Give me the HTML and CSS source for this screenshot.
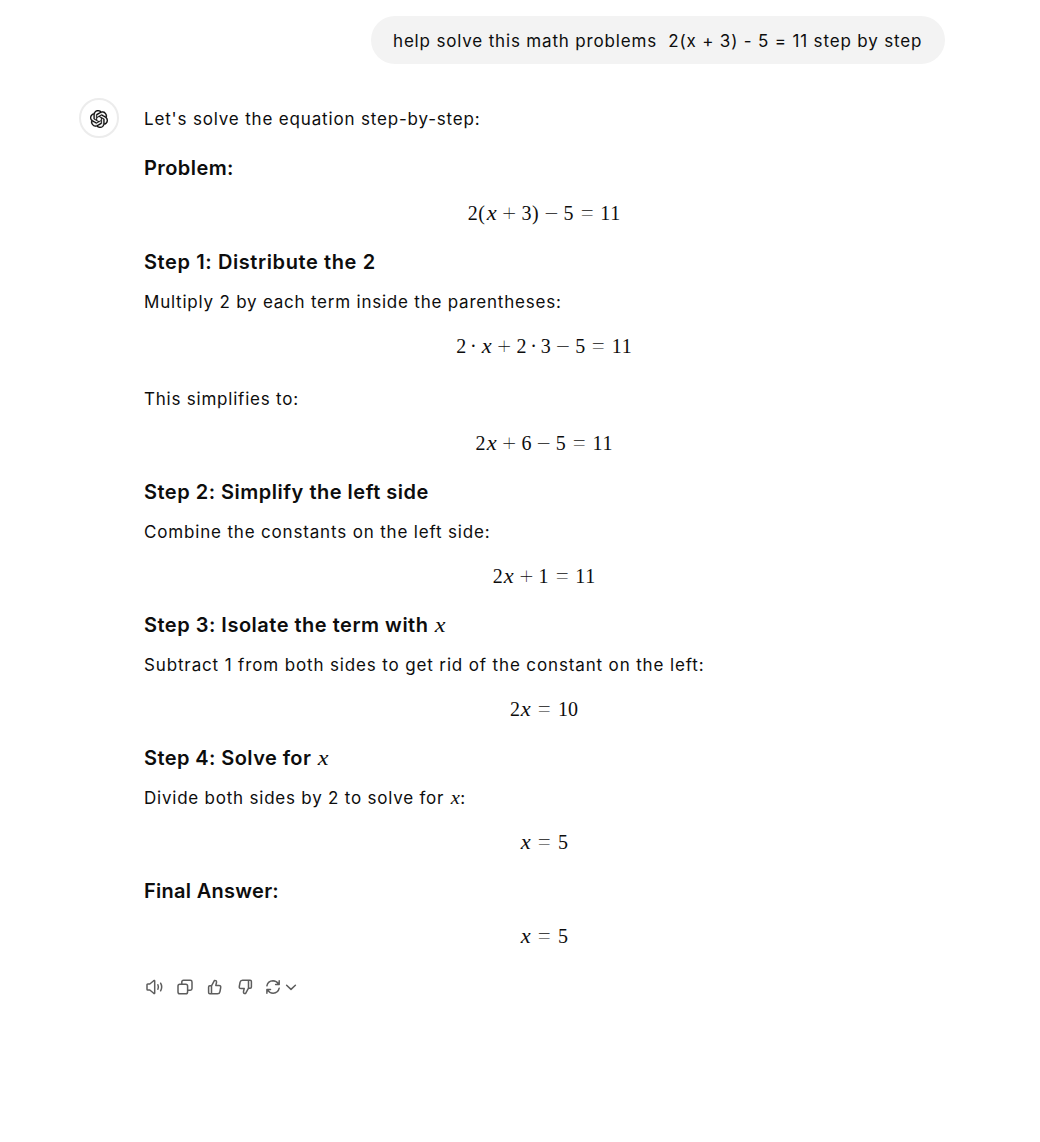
FILE: index.html
```html
<!DOCTYPE html>
<html lang="en">
<head>
<meta charset="utf-8">
<title>Solving an equation</title>
<link rel="stylesheet" href="styles.css">
</head>
<body>
<main class="chat">
  <div class="user-row"><div class="bubble">help solve this math problems&nbsp; 2(x + 3) - 5 = 11 step by step</div></div>
  <article class="reply">
    <div class="avatar">
      <svg viewBox="0 0 24 24" width="18" height="18" fill="currentColor" stroke="currentColor" stroke-width=".3"><path d="M22.28 9.82a5.98 5.98 0 0 0-.52-4.91 6.05 6.05 0 0 0-6.51-2.9A6.07 6.07 0 0 0 4.98 4.18a5.98 5.98 0 0 0-4 2.9 6.05 6.05 0 0 0 .74 7.1 5.98 5.98 0 0 0 .51 4.91 6.05 6.05 0 0 0 6.52 2.9A5.98 5.98 0 0 0 13.26 24a6.06 6.06 0 0 0 5.77-4.21 5.99 5.99 0 0 0 4-2.9 6.06 6.06 0 0 0-.75-7.07zM13.26 22.43a4.48 4.48 0 0 1-2.88-1.04l.14-.08 4.78-2.76a.8.8 0 0 0 .39-.68v-6.74l2.02 1.17a.07.07 0 0 1 .04.05v5.58a4.5 4.5 0 0 1-4.49 4.5zM3.6 18.3a4.47 4.47 0 0 1-.54-3.01l.14.09 4.78 2.76a.77.77 0 0 0 .78 0l5.84-3.37v2.33a.08.08 0 0 1-.03.06L9.74 19.95a4.5 4.5 0 0 1-6.14-1.65zM2.34 7.9a4.49 4.49 0 0 1 2.37-1.98V11.6a.77.77 0 0 0 .39.68l5.81 3.35-2.02 1.17a.08.08 0 0 1-.07 0l-4.83-2.79A4.5 4.5 0 0 1 2.34 7.87zm16.6 3.85-5.84-3.39 2.02-1.16a.08.08 0 0 1 .07 0l4.83 2.79a4.49 4.49 0 0 1-.68 8.1v-5.67a.79.79 0 0 0-.4-.67zm2.01-3.02-.14-.09-4.77-2.78a.78.78 0 0 0-.79 0L9.41 9.23V6.9a.07.07 0 0 1 .03-.06l4.83-2.79a4.5 4.5 0 0 1 6.68 4.66zM8.31 12.86l-2.02-1.16a.08.08 0 0 1-.04-.06V6.07a4.5 4.5 0 0 1 7.38-3.45l-.14.08-4.78 2.76a.8.8 0 0 0-.4.68zm1.1-2.36 2.6-1.5 2.6 1.5v3l-2.6 1.5-2.6-1.5z"/></svg>
    </div>
    <div class="content">
      <p>Let's solve the equation step-by-step:</p>
      <h3>Problem:</h3>
      <div class="eq after-heading"><i class="n">2</i><i class="b">(</i><i class="x">x</i><i class="o">+</i><i class="n">3</i><i class="b">)</i><i class="o">−</i><i class="n">5</i><i class="r">=</i><i class="n">1</i><i class="n">1</i></div>
      <h3 class="loose">Step 1: Distribute the 2</h3>
      <p class="snug">Multiply 2 by each term inside the parentheses:</p>
      <div class="eq"><i class="n">2</i><i class="d">·</i><i class="x">x</i><i class="o">+</i><i class="n">2</i><i class="d">·</i><i class="n">3</i><i class="o">−</i><i class="n">5</i><i class="r">=</i><i class="n">1</i><i class="n">1</i></div>
      <p class="next snug">This simplifies to:</p>
      <div class="eq"><i class="n">2</i><i class="x">x</i><i class="o">+</i><i class="n">6</i><i class="o">−</i><i class="n">5</i><i class="r">=</i><i class="n">1</i><i class="n">1</i></div>
      <h3 class="medium">Step 2: Simplify the left side</h3>
      <p>Combine the constants on the left side:</p>
      <div class="eq"><i class="n">2</i><i class="x">x</i><i class="o">+</i><i class="n">1</i><i class="r">=</i><i class="n">1</i><i class="n">1</i></div>
      <h3 class="medium">Step 3: Isolate the term with <i class="x">x</i></h3>
      <p class="wide">Subtract 1 from both sides to get rid of the constant on the left:</p>
      <div class="eq"><i class="n">2</i><i class="x">x</i><i class="r">=</i><i class="n">1</i><i class="n">0</i></div>
      <h3>Step 4: Solve for <i class="x">x</i></h3>
      <p class="snug">Divide both sides by 2 to solve for <i class="x">x</i>:</p>
      <div class="eq"><i class="x">x</i><i class="r">=</i><i class="n">5</i></div>
      <h3 class="tight">Final Answer:</h3>
      <div class="eq after-heading"><i class="x">x</i><i class="r">=</i><i class="n">5</i></div>
      <div class="actions">
        <svg viewBox="0 0 20 18"><path d="M3.800 6h2L9.700 2.700q1-.8 1 .6v11.400q0 1.400-1 .6L5.800 12h-2q-.8 0-.8-.8V6.800Q3 6 3.800 6zM13.900 6.800q1 2.200 0 4.400M16.600 5.200q2.200 3.800 0 7.600"/></svg>
        <svg viewBox="0 0 20 18"><rect x="4" y="6.200" width="9.600" height="9.600" rx="1.800"/><path d="M7.800 6V4q0-1.700 1.700-1.700h6.800Q18 2.300 18 4v6.500q0 1.700-1.700 1.700H13.800"/></svg>
        <svg viewBox="0 0 20 18"><path d="M7.500 7.800 10.500 2.400q2.300-.2 2 2.100l-.7 2.900h3.100q2.200 0 1.800 2.100l-.8 4.300q-.4 2-2.400 2h-6zM7.500 7.800H5.800Q4.600 7.800 4.600 9v5.600q0 1.200 1.200 1.200h1.700z"/></svg>
        <svg viewBox="-1 0 20 18"><path d="M13.500 10.200 10.500 15.600q-2.300.2-2-2.100l.7-2.900H6.100q-2.200 0-1.800-2.100l.8-4.300q.4-2 2.400-2h6zM13.500 10.200h1.700q1.200 0 1.200-1.200V3.400q0-1.200-1.200-1.200h-1.700z"/></svg>
        <span class="regenerate">
          <svg viewBox="0 0 18 18"><path d="M2.900 7.800Q3.900 3 9 2.800q3.500 0 5.700 3.300M15.200 2.800v3.600h-3.600M15.200 10.200q-1 4.800-6.100 5-3.500 0-5.700-3.300M2.900 15.200v-3.600h3.600"/></svg>
          <svg class="chevron" viewBox="0 0 12 18"><path d="m1.600 7.200 4.400 4.200 4.400-4.200"/></svg>
        </span>
      </div>
    </div>
  </article>
</main>
</body>
</html>
```

FILE: styles.css
```css
body { margin: 0; background: #fff; color: #0d0d0d; font: 17px/28px Inter, "Liberation Sans", sans-serif; letter-spacing: .83px; }
.chat { width: 865px; margin-left: 79px; padding-top: 16px; }
.user-row { display: flex; justify-content: flex-end; }
.bubble { box-sizing: border-box; width: 574px; margin-right: -1px; height: 48px; padding: 11px 22px 9px; border-radius: 24px; background: #f3f3f3; white-space: nowrap; }
.reply { display: flex; gap: 25px; margin-top: 34px; }
.avatar { box-sizing: border-box; display: grid; place-items: center; flex: none; width: 40px; height: 40px; padding-top: 1px; border: 2px solid #ececec; border-radius: 50%; }
.avatar svg { margin-right: 1px; }
.content { flex: 1; padding-top: 7px; }
p, h3 { margin: 0; white-space: nowrap; }
p.snug { letter-spacing: .78px; }
p.wide { letter-spacing: .86px; }
h3 { margin-top: 19px; font-size: 20px; line-height: 32px; font-weight: 600; letter-spacing: .42px; }
h3.loose { letter-spacing: .6px; }
h3.medium { letter-spacing: .5px; }
h3.tight { letter-spacing: .28px; }
h3 + p { margin-top: 10px; }
.next { margin-top: 25px; }
.eq { display: flex; justify-content: center; height: 28px; margin-top: 16px; font: 20px/28px "Liberation Serif", serif; letter-spacing: 0; }
.eq.after-heading { margin-top: 15px; }
i { display: inline-block; text-align: center; font-style: normal; letter-spacing: 0; }
.n { width: 10px; }
.b { width: 7.8px; }
.x { width: .572em; font-family: "Liberation Serif", serif; font-style: italic; font-weight: 400; line-height: 1; transform: scaleX(1.12); }
h3 .x, p .x { font-size: 1.08em; }
.eq .x { line-height: 28px; }
.o { width: 24.4px; }
.r { width: 26.7px; }
.o, .r { font-family: Inter, sans-serif; font-size: 28px; line-height: 25px; font-weight: 100; }
.r { transform: scaleX(1.12); line-height: 24px; }
.d { width: 14.4px; }
.actions { display: flex; gap: 10px; margin-top: 28px; height: 18px; }
.actions svg { width: 20px; height: 18px; fill: none; stroke: #5d5d5d; stroke-width: 1.5; stroke-linecap: round; stroke-linejoin: round; }
.regenerate { display: flex; gap: 3px; }
.actions .regenerate svg { width: 18px; }
.actions .regenerate .chevron { width: 12px; }
```
